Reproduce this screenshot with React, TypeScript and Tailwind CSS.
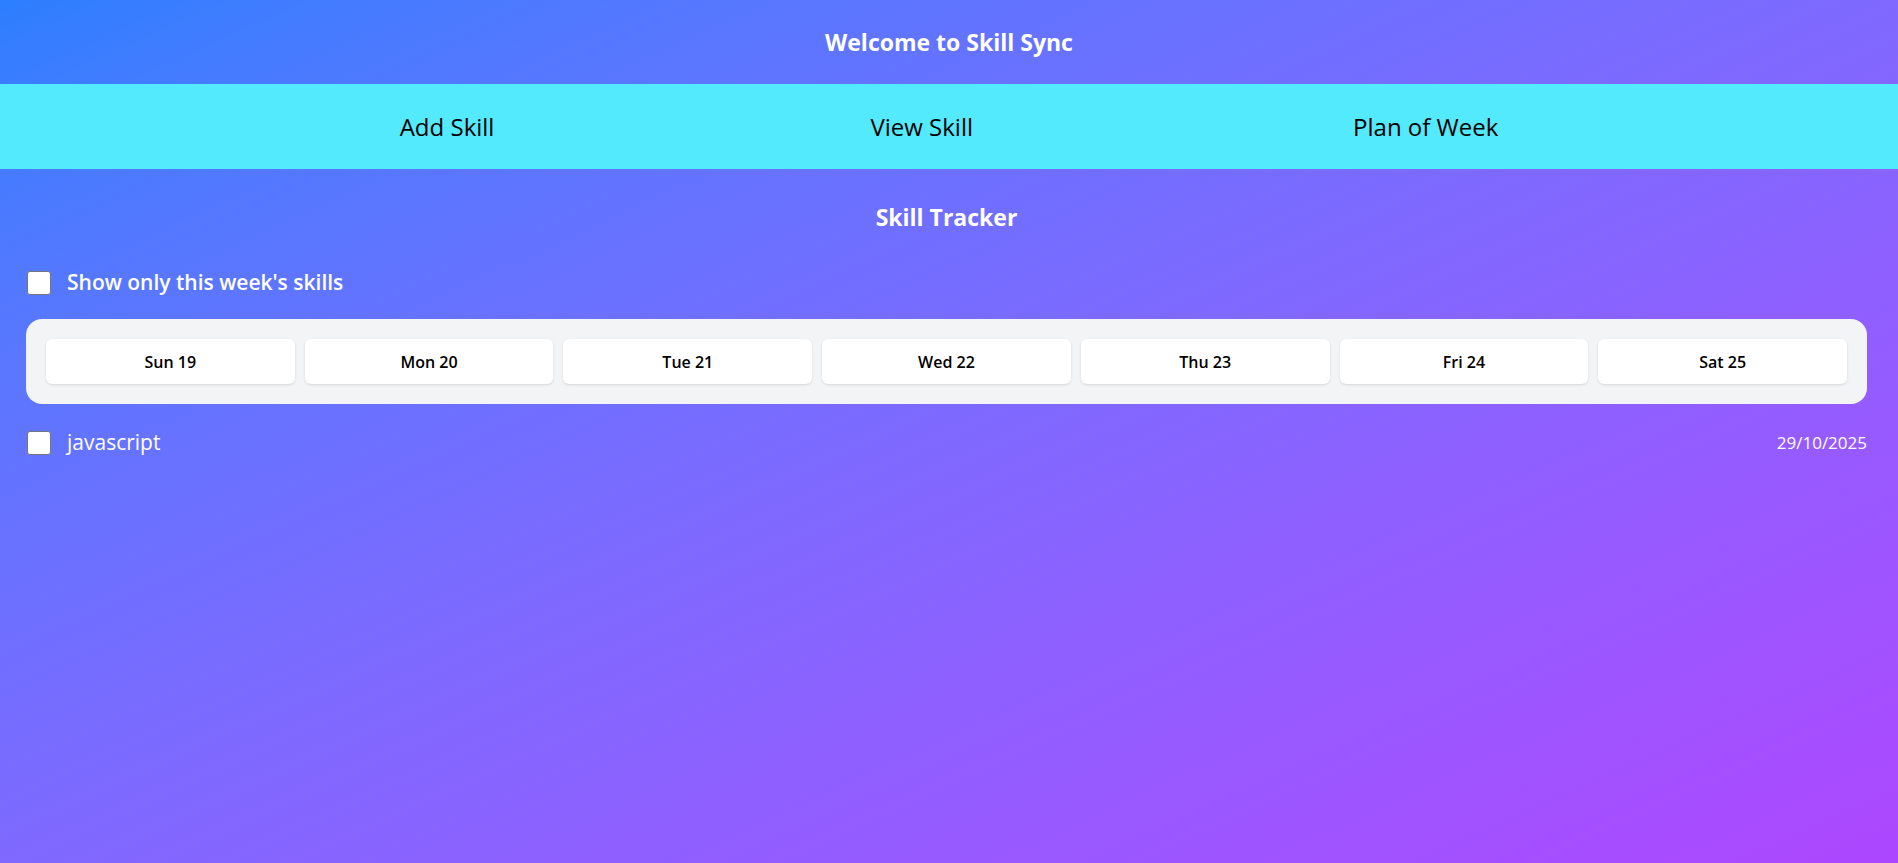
import { useState } from 'react';

const days = ['Sun 19', 'Mon 20', 'Tue 21', 'Wed 22', 'Thu 23', 'Fri 24', 'Sat 25'];

const skills = [{ name: 'javascript', date: '29/10/2025', done: false }];

export default function App() {
  const [weekOnly, setWeekOnly] = useState(false);
  const [done, setDone] = useState<boolean[]>(skills.map((s) => s.done));

  return (
    <div className="min-h-screen bg-linear-to-br from-blue-500 to-purple-500 text-white font-['Segoe_UI','Open_Sans',sans-serif]">
      {/* Header */}
      <header className="h-[84px] flex items-center justify-center">
        <h1 className="text-[23px] font-bold leading-8">Welcome to Skill Sync</h1>
      </header>

      {/* Nav */}
      <nav className="h-[85px] bg-cyan-300 flex items-center justify-center text-black text-[24px]">
        <button type="button" className="cursor-pointer mr-[376px]">Add Skill</button>
        <button type="button" className="cursor-pointer mr-[380px]">View Skill</button>
        <button type="button" className="cursor-pointer">Plan of Week</button>
      </nav>

      <main className="pl-[26px] pr-[31px] pt-8">
        <h2 className="text-center text-[23px] font-bold leading-8">Skill Tracker</h2>

        <label className="mt-[34px] ml-px flex items-center gap-4 h-8 cursor-pointer">
          <input
            type="checkbox"
            checked={weekOnly}
            onChange={() => setWeekOnly(!weekOnly)}
            className="appearance-none w-6 h-6 bg-white border border-[#767676] rounded-[3px] checked:bg-blue-600"
          />
          <span className="text-[21px] font-semibold">Show only this week's skills</span>
        </label>

        {/* Week strip */}
        <div className="mt-5 bg-gray-100 rounded-2xl p-5 grid grid-cols-7 gap-[10px]">
          {days.map((d) => (
            <button
              key={d}
              type="button"
              className="h-[45px] bg-white rounded-md shadow-sm text-black text-[16px] font-semibold cursor-pointer"
            >
              {d}
            </button>
          ))}
        </div>

        {/* Skills */}
        <ul className="mt-[23px]">
          {skills.map((s, i) => (
            <li key={s.name} className="flex items-center justify-between h-8">
              <label className="ml-px flex items-center gap-4 cursor-pointer">
                <input
                  type="checkbox"
                  checked={done[i]}
                  onChange={() => setDone(done.map((v, j) => (j === i ? !v : v)))}
                  className="appearance-none w-6 h-6 bg-white border border-[#767676] rounded-[3px] checked:bg-blue-600"
                />
                <span className="text-[21px]">{s.name}</span>
              </label>
              <span className="text-[17px]">{s.date}</span>
            </li>
          ))}
        </ul>
      </main>
    </div>
  );
}
